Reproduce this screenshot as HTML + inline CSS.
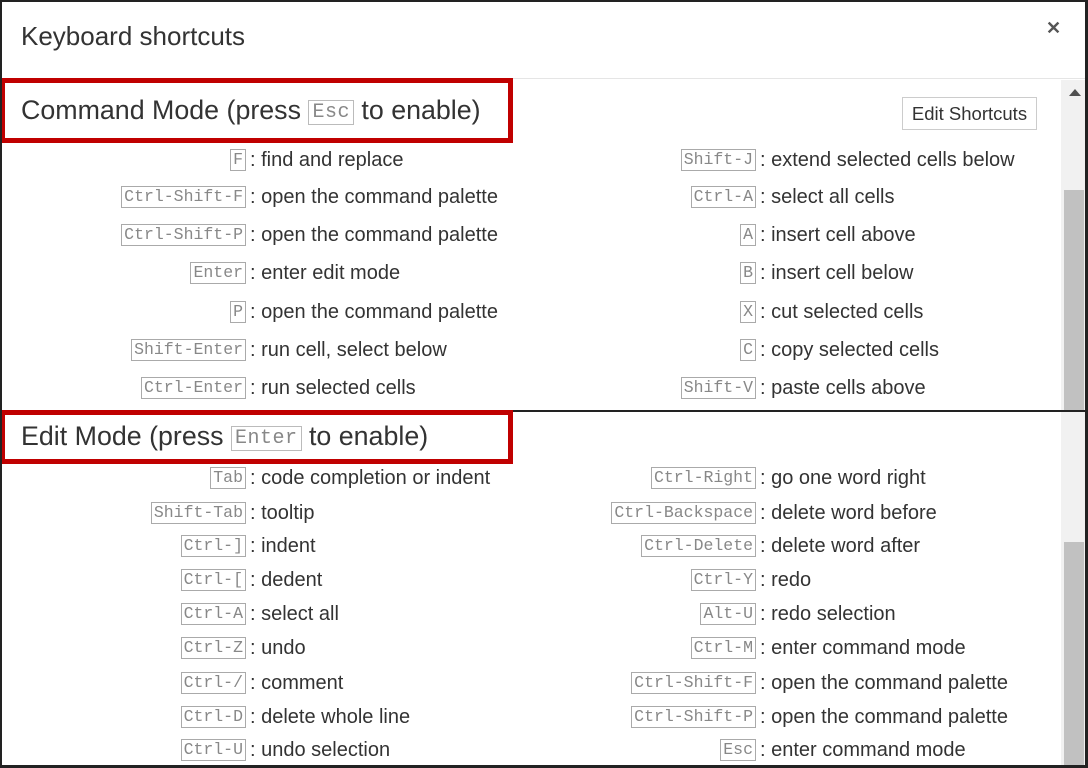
<!DOCTYPE html>
<html><head><meta charset="utf-8"><style>
*{margin:0;padding:0;box-sizing:border-box}
body{width:1088px;height:768px;overflow:hidden;background:#fff;position:relative;font-family:"Liberation Sans",Arial,sans-serif;color:#333}
.frame{position:absolute;left:0;top:0;width:1088px;height:768px;border:2px solid #222;border-right-width:3px;border-bottom-width:3px;pointer-events:none;z-index:5}
.title{position:absolute;left:21px;top:21px;font-size:26px;color:#333}
.close{position:absolute;left:1046px;top:18px;font-size:18px;font-weight:bold;color:#555}
.hline{position:absolute;left:2px;top:78px;width:1083px;height:1px;background:#e5e5e5}
.track{position:absolute;left:1061px;width:24px;background:#f1f1f1}
.thumb{position:absolute;left:1064px;width:20px;background:#c1c1c1}
.h{position:absolute;left:21px;font-size:26.8px;color:#333;white-space:nowrap}
.h kbd{font-family:"Liberation Mono",monospace;font-size:20px;color:#888;border:1px solid #bbb;padding:0 3px;letter-spacing:0.5px;vertical-align:2px}
.red{position:absolute;border:5px solid #c00000;left:0;width:513px}
.btn{position:absolute;left:902px;top:97px;width:135px;height:33px;border:1px solid #ccc;font-size:18.5px;color:#333;text-align:center;line-height:31px}
.row{position:absolute;white-space:nowrap;font-size:20px;height:24px;line-height:24px}
.row .k{position:absolute;right:0;top:1px;font-family:"Liberation Mono",monospace;font-size:16.5px;color:#888;border:1px solid #aaa;padding:0 2px;line-height:20px;height:22px}
.row .t{position:absolute;left:4px;top:0;color:#333}
.div{position:absolute;left:2px;top:410px;width:1083px;height:2px;background:#222}
</style></head><body>
<div class="title">Keyboard shortcuts</div>
<div class="close">✕</div>
<div class="hline"></div>
<div class="track" style="top:80px;height:330px"></div>
<div style="position:absolute;left:1069px;top:89px;width:0;height:0;border-left:6px solid transparent;border-right:6px solid transparent;border-bottom:7px solid #505050"></div>
<div class="thumb" style="top:190px;height:220px"></div>
<div class="track" style="top:412px;height:354px"></div>
<div class="thumb" style="top:542px;height:224px"></div>
<div class="h" style="top:95px">Command Mode (press <kbd>Esc</kbd> to enable)</div>
<div class="red" style="top:78px;height:65px"></div>
<div class="btn">Edit Shortcuts</div>
<div class="div"></div>
<div class="h" style="top:421px">Edit Mode (press <kbd>Enter</kbd> to enable)</div>
<div class="red" style="top:410px;height:54px"></div>

<div id="rows"></div>
<script>
const L=[[159,"F","find and replace"],[196,"Ctrl-Shift-F","open the command palette"],[234,"Ctrl-Shift-P","open the command palette"],[272,"Enter","enter edit mode"],[311,"P","open the command palette"],[349,"Shift-Enter","run cell, select below"],[387,"Ctrl-Enter","run selected cells"],
[477,"Tab","code completion or indent"],[512,"Shift-Tab","tooltip"],[545,"Ctrl-]","indent"],[579,"Ctrl-[","dedent"],[613,"Ctrl-A","select all"],[647,"Ctrl-Z","undo"],[682,"Ctrl-/","comment"],[716,"Ctrl-D","delete whole line"],[749,"Ctrl-U","undo selection"]];
const R=[[159,"Shift-J","extend selected cells below"],[196,"Ctrl-A","select all cells"],[234,"A","insert cell above"],[272,"B","insert cell below"],[311,"X","cut selected cells"],[349,"C","copy selected cells"],[387,"Shift-V","paste cells above"],
[477,"Ctrl-Right","go one word right"],[512,"Ctrl-Backspace","delete word before"],[545,"Ctrl-Delete","delete word after"],[579,"Ctrl-Y","redo"],[613,"Alt-U","redo selection"],[647,"Ctrl-M","enter command mode"],[682,"Ctrl-Shift-F","open the command palette"],[716,"Ctrl-Shift-P","open the command palette"],[749,"Esc","enter command mode"]];
let h="";
function add(a,x){for(const [y,k,t] of a){h+=`<div class="row" style="left:0;top:${y-11}px;width:${x}px"><span class="k">${k}</span><span class="t" style="left:${x+4}px">: ${t}</span></div>`;}}
add(L,246);add(R,756);
document.getElementById("rows").innerHTML=h;
</script>
<div class="frame"></div>
</body></html>
